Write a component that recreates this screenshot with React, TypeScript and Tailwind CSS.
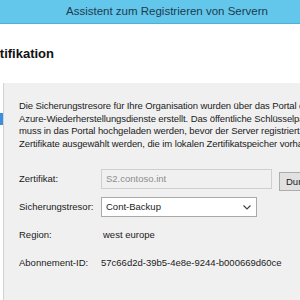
const FONT = "font-['Liberation_Sans',_Arial,_sans-serif]"

const LINES = [
  'Die Sicherungstresore für Ihre Organisation wurden über das Portal der',
  'Azure-Wiederherstellungsdienste erstellt. Das öffentliche Schlüsselpaar',
  'muss in das Portal hochgeladen werden, bevor der Server registriert wird.',
  'Zertifikate ausgewählt werden, die im lokalen Zertifikatspeicher vorhanden',
]

function Row({ label, children }: { label: string; children: React.ReactNode }) {
  return (
    <div className="flex h-[28px] shrink-0 items-start">
      <span className="w-[82px] shrink-0 leading-[20px]">{label}</span>
      {children}
    </div>
  )
}

export default function App() {
  return (
    <div className={`${FONT} flex h-[300px] w-[300px] flex-col overflow-hidden bg-white text-[#1b1b1b]`}>
      <div className="h-[24px] shrink-0 border-b border-[#4fb0d6] bg-[#63c7ec] pl-[66px] text-[11.5px] leading-[23px] whitespace-nowrap text-[#1d3b4c]">
        Assistent zum Registrieren von Servern
      </div>

      <div className="flex h-[59px] shrink-0 items-center">
        <div className="flex w-[54px] justify-end whitespace-nowrap text-[13px] font-bold text-[#111]">
          Tresoridentifikation
        </div>
      </div>

      <div className="flex h-[217px] shrink-0">
        <div className="w-[4px] shrink-0 border-r border-[#d2d2d2] bg-white pt-[30px]">
          <div className="h-[12px] w-[3px] bg-[#3c8fdc]" />
        </div>

        <div className="flex w-[296px] flex-col overflow-hidden bg-[#f0f0f0] pl-[15px] text-[9.5px] whitespace-nowrap">
          <div className="h-[17px] shrink-0" />
          <div className="h-[50px] shrink-0 leading-[12.5px] tracking-[-0.1px]">
            {LINES.map((l) => (
              <div key={l}>{l}</div>
            ))}
          </div>
          <div className="h-[19px] shrink-0" />

          <Row label="Zertifikat:">
            <div className="h-[20px] w-[171px] shrink-0 border border-[#cfcfcf] bg-[#f0f0f0] pl-[4px] leading-[18px] text-[#8d8d8d]">
              S2.contoso.int
            </div>
            <button className="ml-[7px] mt-[3px] h-[19px] w-[60px] shrink-0 border border-[#acacac] bg-[#e1e1e1] pl-[6px] text-left leading-[17px]">
              Durchsuchen...
            </button>
          </Row>
          <Row label="Sicherungstresor:">
            <div className="flex h-[20px] w-[156px] shrink-0 items-center justify-between border border-[#a9a9a9] bg-white px-[4px]">
              <span>Cont-Backup</span>
              <svg width="8" height="5" viewBox="0 0 8 5" className="mr-[1px]">
                <path d="M0.5 0.5 L4 4 L7.5 0.5" fill="none" stroke="#444" strokeWidth="1.2" />
              </svg>
            </div>
          </Row>
          <Row label="Region:">
            <span className="pl-[2px] leading-[20px]">west europe</span>
          </Row>
          <Row label="Abonnement-ID:">
            <span className="leading-[20px]">57c66d2d-39b5-4e8e-9244-b000669d60ce</span>
          </Row>
        </div>
      </div>
    </div>
  )
}
